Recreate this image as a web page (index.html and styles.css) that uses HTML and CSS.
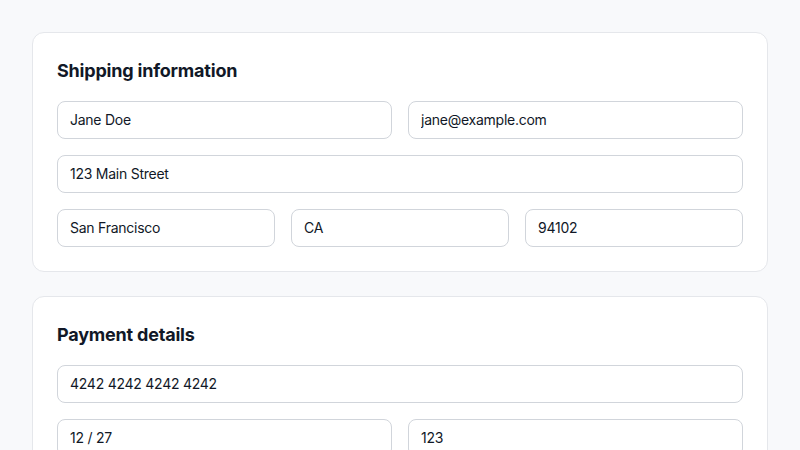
FILE: index.html
```html
<!DOCTYPE html>
<html lang="en">
<head>
<meta charset="utf-8">
<title>Checkout</title>
<link rel="stylesheet" href="styles.css">
</head>
<body>
<main class="page">
  <section class="card">
    <h2 class="card-title">Shipping information</h2>
    <div class="fields">
      <div class="row row-2">
        <input class="field" type="text" value="Jane Doe">
        <input class="field" type="text" value="jane@example.com">
      </div>
      <div class="row row-1">
        <input class="field" type="text" value="123 Main Street">
      </div>
      <div class="row row-3">
        <input class="field" type="text" value="San Francisco">
        <input class="field" type="text" value="CA">
        <input class="field" type="text" value="94102">
      </div>
    </div>
  </section>
  <section class="card">
    <h2 class="card-title">Payment details</h2>
    <div class="fields">
      <div class="row row-1">
        <input class="field" type="text" value="4242 4242 4242 4242">
      </div>
      <div class="row row-2">
        <input class="field" type="text" value="12 / 27">
        <input class="field" type="text" value="123">
      </div>
    </div>
  </section>
</main>
</body>
</html>
```
FILE: styles.css
```css
* { box-sizing: border-box; }
html, body { margin: 0; padding: 0; }
body {
  background: #f8f9fb;
  font-family: Inter, "Liberation Sans", sans-serif;
  color: #111827;
}
.page {
  padding: 32px;
  display: flex;
  flex-direction: column;
  gap: 24px;
}
.card {
  background: #ffffff;
  border: 1px solid #e5e7eb;
  border-radius: 12px;
  padding: 24px;
}
.card-title {
  margin: 0 0 16px 0;
  font-size: 18px;
  line-height: 28px;
  font-weight: 700;
  letter-spacing: -0.2px;
  color: #111827;
}
.fields {
  display: flex;
  flex-direction: column;
  gap: 16px;
}
.row {
  display: grid;
  gap: 16px;
}
.row-1 { grid-template-columns: 1fr; }
.row-2 { grid-template-columns: 1fr 1fr; }
.row-3 { grid-template-columns: 1fr 1fr 1fr; }
.field {
  display: block;
  width: 100%;
  height: 38px;
  margin: 0;
  padding: 7px 12px 9px;
  border: 1px solid #d1d5db;
  border-radius: 8px;
  background: #ffffff;
  font-family: Inter, "Liberation Sans", sans-serif;
  font-size: 14px;
  line-height: 20px;
  letter-spacing: -0.25px;
  color: #111827;
  outline: none;
}
```
